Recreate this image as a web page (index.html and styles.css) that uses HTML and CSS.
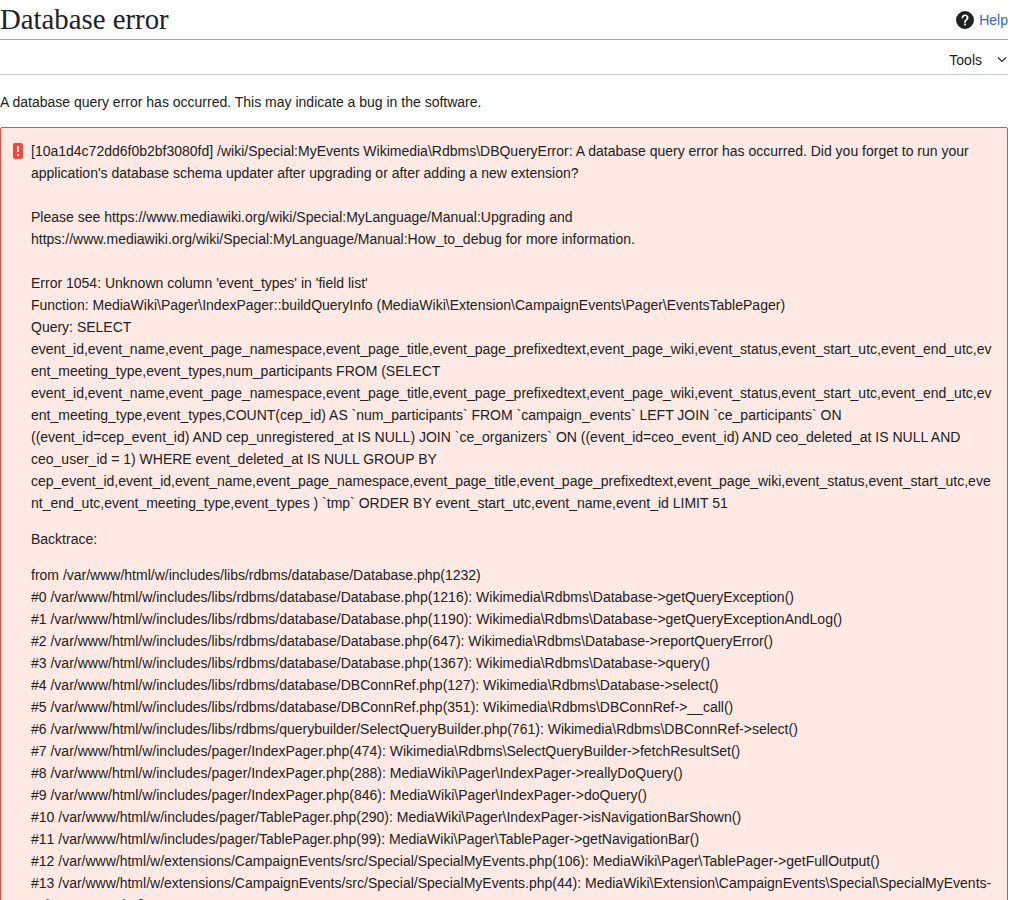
FILE: index.html
```html
<!DOCTYPE html>
<html lang="en">
<head>
<meta charset="utf-8">
<title>Database error</title>
<link rel="stylesheet" href="styles.css">
</head>
<body>
<div class="page">
  <header class="title-bar">
    <h1 class="title">Database error</h1>
    <a class="help" href="#"><svg class="help-icon" viewBox="0 0 20 20" width="18" height="18"><path fill="#202122" d="M10 0a10 10 0 1 0 10 10A10 10 0 0 0 10 0m1 16H9v-2h2zm2.71-7.6a2.64 2.64 0 0 1-.33.74 3.16 3.16 0 0 1-.48.55l-.54.48c-.21.18-.41.35-.58.52a2.54 2.54 0 0 0-.47.56A2.3 2.3 0 0 0 11 12a3.79 3.79 0 0 0-.11 1H9.08a8.9 8.9 0 0 1 .07-1.25 3.28 3.28 0 0 1 .25-.9 2.79 2.79 0 0 1 .41-.67 4 4 0 0 1 .58-.58c.17-.16.34-.3.51-.44a3 3 0 0 0 .43-.44 1.83 1.83 0 0 0 .3-.55 2 2 0 0 0 .11-.72 2.06 2.06 0 0 0-.17-.86 1.71 1.71 0 0 0-1-.9 1.7 1.7 0 0 0-.5-.1 1.77 1.77 0 0 0-1.53.68 3 3 0 0 0-.5 1.82H6.16a4.74 4.74 0 0 1 .28-1.68 3.56 3.56 0 0 1 .8-1.29 3.88 3.88 0 0 1 1.28-.83A4.59 4.59 0 0 1 10.18 4a4.44 4.44 0 0 1 1.44.23 3.51 3.51 0 0 1 1.15.65 3.08 3.08 0 0 1 .78 1.06 3.54 3.54 0 0 1 .29 1.45 3.39 3.39 0 0 1-.12 1.01z"/></svg><span>Help</span></a>
  </header>
  <div class="tools-bar">
    <span class="tools">Tools</span>
    <svg class="chevron" viewBox="0 0 12 12" width="12" height="12"><path fill="none" stroke="#202122" stroke-width="1.1" d="M2 3.5l4 4 4-4"/></svg>
  </div>
  <p class="intro">A database query error has occurred. This may indicate a bug in the software.</p>
  <div class="error-box">
    <svg class="error-icon" viewBox="0 0 10 16" width="10" height="16"><path fill="#f54739" fill-rule="evenodd" d="M2 0h6a2 2 0 0 1 2 2v12a2 2 0 0 1-2 2H2a2 2 0 0 1-2-2V2a2 2 0 0 1 2-2zM4 3v6h2V3zm0 8v2h2v-2z"/></svg>
    <div class="error-text">
      <p>[10a1d4c72dd6f0b2bf3080fd] /wiki/Special:MyEvents Wikimedia\Rdbms\DBQueryError: A database query error has occurred. Did you forget to run your application's database schema updater after upgrading or after adding a new extension?<br><br>Please see https://www.mediawiki.org/wiki/Special:MyLanguage/Manual:Upgrading and https://www.mediawiki.org/wiki/Special:MyLanguage/Manual:How_to_debug for more information.<br><br>Error 1054: Unknown column 'event_types' in 'field list'<br>Function: MediaWiki\Pager\IndexPager::buildQueryInfo (MediaWiki\Extension\CampaignEvents\Pager\EventsTablePager)<br>Query: SELECT event_id,event_name,event_page_namespace,event_page_title,event_page_prefixedtext,event_page_wiki,event_status,event_start_utc,event_end_utc,event_meeting_type,event_types,num_participants FROM (SELECT event_id,event_name,event_page_namespace,event_page_title,event_page_prefixedtext,event_page_wiki,event_status,event_start_utc,event_end_utc,event_meeting_type,event_types,COUNT(cep_id) AS `num_participants` FROM `campaign_events` LEFT JOIN `ce_participants` ON ((event_id=cep_event_id) AND cep_unregistered_at IS NULL) JOIN `ce_organizers` ON ((event_id=ceo_event_id) AND ceo_deleted_at IS NULL AND ceo_user_id = 1) WHERE event_deleted_at IS NULL GROUP BY cep_event_id,event_id,event_name,event_page_namespace,event_page_title,event_page_prefixedtext,event_page_wiki,event_status,event_start_utc,event_end_utc,event_meeting_type,event_types ) `tmp` ORDER BY event_start_utc,event_name,event_id LIMIT 51</p>
      <p>Backtrace:</p>
      <p>from /var/www/html/w/includes/libs/rdbms/database/Database.php(1232)<br>
#0 /var/www/html/w/includes/libs/rdbms/database/Database.php(1216): Wikimedia\Rdbms\Database-&gt;getQueryException()<br>
#1 /var/www/html/w/includes/libs/rdbms/database/Database.php(<span class="plain-digits">1190</span>): Wikimedia\Rdbms\Database-&gt;getQueryExceptionAndLog()<br>
#2 /var/www/html/w/includes/libs/rdbms/database/Database.php(647): Wikimedia\Rdbms\Database-&gt;reportQueryError()<br>
#3 /var/www/html/w/includes/libs/rdbms/database/Database.php(1367): Wikimedia\Rdbms\Database-&gt;query()<br>
#4 /var/www/html/w/includes/libs/rdbms/database/DBConnRef.php(127): Wikimedia\Rdbms\Database-&gt;select()<br>
#5 /var/www/html/w/includes/libs/rdbms/database/DBConnRef.php(351): Wikimedia\Rdbms\DBConnRef-&gt;__call()<br>
#6 /var/www/html/w/includes/libs/rdbms/querybuilder/SelectQueryBuilder.php(761): Wikimedia\Rdbms\DBConnRef-&gt;select()<br>
#7 /var/www/html/w/includes/pager/IndexPager.php(474): Wikimedia\Rdbms\SelectQueryBuilder-&gt;fetchResultSet()<br>
#8 /var/www/html/w/includes/pager/IndexPager.php(288): MediaWiki\Pager\IndexPager-&gt;reallyDoQuery()<br>
#9 /var/www/html/w/includes/pager/IndexPager.php(846): MediaWiki\Pager\IndexPager-&gt;doQuery()<br>
#10 /var/www/html/w/includes/pager/TablePager.php(290): MediaWiki\Pager\IndexPager-&gt;isNavigationBarShown()<br>
<span class="plain-digits">#11</span> /var/www/html/w/includes/pager/TablePager.php(99): MediaWiki\Pager\TablePager-&gt;getNavigationBar()<br>
#12 /var/www/html/w/extensions/CampaignEvents/src/Special/SpecialMyEvents.php(106): MediaWiki\Pager\TablePager-&gt;getFullOutput()<br>
#13 /var/www/html/w/extensions/CampaignEvents/src/Special/SpecialMyEvents.php(44): MediaWiki\Extension\CampaignEvents\Special\SpecialMyEvents-&gt;showEventsList()</p>
    </div>
  </div>
</div>
</body>
</html>
```
FILE: styles.css
```css
html, body { margin: 0; padding: 0; background: #fff; }
body { font-family: "Liberation Sans", Arial, sans-serif; font-size: 14px; line-height: 22px; color: #202122; height: 900px; overflow: hidden; }
.page { width: 1008px; }
.title-bar { display: flex; justify-content: space-between; align-items: center; height: 39px; border-bottom: 1px solid #a2a9b1; }
.title { margin: 0; font-family: "Liberation Serif", "Times New Roman", serif; font-weight: 400; font-size: 28.8px; line-height: 39px; }
.help { display: flex; align-items: center; gap: 5px; color: #3366cc; text-decoration: none; }
.help-icon { display: block; }
.tools-bar { display: flex; justify-content: flex-end; align-items: center; gap: 13px; height: 28px; padding-top: 6px; border-bottom: 1px solid #c8ccd1; }
.tools { margin-right: 1px; }
.chevron { display: block; }
.intro { margin: 16px 0 14px; }
.error-box { display: flex; gap: 8px; padding: 12px; border: 1px solid #f54739; border-radius: 2px; background: #ffe9e5; box-sizing: border-box; }
.error-icon { flex: none; margin-top: 3px; }
.error-text { flex: 1; min-width: 0; }
.error-text p { margin: 0 0 14px; word-break: break-word; }
.plain-digits { font-kerning: none; }
```
